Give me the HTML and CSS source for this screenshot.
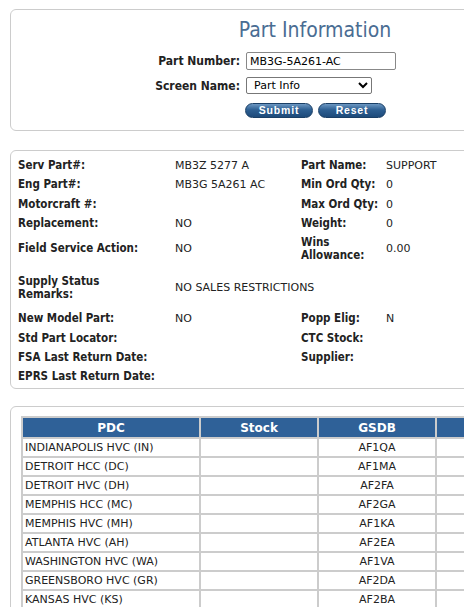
FILE: index.html
```html
<!DOCTYPE html>
<html lang="en">
    <head>
        <meta charset="UTF-8" />
        <meta name="viewport" content="width=device-width, initial-scale=1.0" />
        <title>Part Information</title>
        <link rel="stylesheet" href="styles.css">
    </head>
    <body>
        <!-- 검색 박스 -->
        <section class="box searchbx">
            <h1 class="tit">Part Information</h1>
            <form class="sform">
                <label class="lb" for="pno">Part Number:</label>
                <input id="pno" class="inp" type="text" value="MB3G-5A261-AC" />
                <label class="lb" for="scr">Screen Name:</label>
                <select id="scr" class="sel">
                    <option>Part Info</option>
                </select>
                <span></span>
                <div class="btns">
                    <button type="button" class="btn">Submit</button>
                    <button type="button" class="btn">Reset</button>
                </div>
            </form>
        </section>

        <!-- 부품정보 박스 -->
        <section class="box infobx">
            <div class="row">
                <b>Serv Part#:</b><span>MB3Z 5277 A</span>
                <b>Part Name:</b><span>SUPPORT</span>
            </div>
            <div class="row">
                <b>Eng Part#:</b><span>MB3G 5A261 AC</span>
                <b>Min Ord Qty:</b><span>0</span>
            </div>
            <div class="row">
                <b>Motorcraft #:</b><span></span>
                <b>Max Ord Qty:</b><span>0</span>
            </div>
            <div class="row">
                <b>Replacement:</b><span>NO</span>
                <b>Weight:</b><span>0</span>
            </div>
            <div class="row tall">
                <b>Field Service Action:</b><span>NO</span>
                <b>Wins<br />Allowance:</b><span>0.00</span>
            </div>
            <div class="row tall gap">
                <b>Supply Status<br />Remarks:</b><span class="wide">NO SALES RESTRICTIONS</span>
            </div>
            <div class="row">
                <b>New Model Part:</b><span>NO</span>
                <b>Popp Elig:</b><span>N</span>
            </div>
            <div class="row">
                <b>Std Part Locator:</b><span></span>
                <b>CTC Stock:</b><span></span>
            </div>
            <div class="row">
                <b>FSA Last Return Date:</b><span></span>
                <b>Supplier:</b><span></span>
            </div>
            <div class="row">
                <b>EPRS Last Return Date:</b><span></span>
                <b></b><span></span>
            </div>
        </section>

        <!-- 재고 테이블 박스 -->
        <section class="box stockbx">
            <table class="tbl">
                <colgroup>
                    <col class="c1" />
                    <col class="c2" />
                    <col class="c3" />
                    <col class="c4" />
                </colgroup>
                <thead>
                    <tr>
                        <th>PDC</th>
                        <th>Stock</th>
                        <th>GSDB</th>
                        <th>Phone</th>
                    </tr>
                </thead>
                <tbody>
                    <tr><td>INDIANAPOLIS HVC (IN)</td><td></td><td class="ct">AF1QA</td><td></td></tr>
                    <tr><td>DETROIT HCC (DC)</td><td></td><td class="ct">AF1MA</td><td></td></tr>
                    <tr><td>DETROIT HVC (DH)</td><td></td><td class="ct">AF2FA</td><td></td></tr>
                    <tr><td>MEMPHIS HCC (MC)</td><td></td><td class="ct">AF2GA</td><td></td></tr>
                    <tr><td>MEMPHIS HVC (MH)</td><td></td><td class="ct">AF1KA</td><td></td></tr>
                    <tr><td>ATLANTA HVC (AH)</td><td></td><td class="ct">AF2EA</td><td></td></tr>
                    <tr><td>WASHINGTON HVC (WA)</td><td></td><td class="ct">AF1VA</td><td></td></tr>
                    <tr><td>GREENSBORO HVC (GR)</td><td></td><td class="ct">AF2DA</td><td></td></tr>
                    <tr><td>KANSAS HVC (KS)</td><td></td><td class="ct">AF2BA</td><td></td></tr>
                    <tr><td>DENVER HVC (DV)</td><td></td><td class="ct">AF2CA</td><td></td></tr>
                </tbody>
            </table>
        </section>
    </body>
</html>
```

FILE: styles.css
```css
/* 공통 - 화면보다 넓은 페이지라 스크롤바는 숨김 */
html {
    overflow: hidden;
}
body {
    width: 610px;
    margin: 9px 10px;
    font-family: "DejaVu Sans", sans-serif;
    font-size: 11px;
    color: #222;
    background-color: #fff;
}

/* 둥근 테두리 박스 */
.box {
    border: 1px solid #ccc;
    border-radius: 6px;
}

/* 검색 박스 */
.searchbx {
    height: 112px;
    padding-top: 8px;
}
.tit {
    margin: 0 0 10px;
    font-family: "DejaVu Sans Condensed", "DejaVu Sans", sans-serif;
    font-size: 21px;
    font-weight: normal;
    text-align: center;
    color: #4a6d93;
}
.sform {
    display: grid;
    grid-template-columns: 235px 160px;
    row-gap: 7px;
    align-items: center;
}
.lb {
    justify-self: end;
    padding-right: 6px;
    font-family: "DejaVu Sans Condensed", "DejaVu Sans", sans-serif;
    font-size: 12px;
    font-weight: bold;
}
.inp {
    width: 150px;
    height: 18px;
    box-sizing: border-box;
    margin: 0;
    padding: 0 3px;
    border: 1px solid #888;
    border-radius: 2px;
    font: inherit;
}
.sel {
    width: 126px;
    height: 17px;
    box-sizing: border-box;
    margin: 0;
    padding: 0 0 0 3px;
    border: 1px solid #777;
    border-radius: 2px;
    font: inherit;
    background: #fff;
}
.btns {
    display: flex;
    gap: 5px;
    margin: 2px 0 0 -1px;
}
/* 파란 알약 버튼 */
.btn {
    width: 68px;
    height: 15px;
    padding: 0;
    border: 1px solid #1a3f66;
    border-radius: 8px;
    background: linear-gradient(#6c97c2, #2d5f92 45%, #1d4a7a);
    color: #fff;
    font-size: 10.5px;
    font-weight: bold;
    letter-spacing: 0.8px;
    line-height: 13px;
}

/* 부품정보 박스 */
.infobx {
    margin-top: 19px;
    padding: 5px 0 2px 7px;
}
.row {
    display: grid;
    grid-template-columns: 157px 126px 85px 1fr;
    align-items: center;
    height: 19.3px;
}
.row.tall {
    height: 31px;
}
.row.gap {
    margin: 8px 0 6px;
}
.row b {
    font-family: "DejaVu Sans Condensed", "DejaVu Sans", sans-serif;
    font-size: 11.5px;
    font-weight: bold;
    line-height: 13px;
}
.row .wide {
    grid-column: span 3;
}

/* 재고 테이블 박스 */
.stockbx {
    margin-top: 17px;
    padding: 9px 10px 0;
}
.tbl {
    width: 100%;
    table-layout: fixed;
    border-collapse: collapse;
}
.tbl .c1 { width: 178px; }
.tbl .c2 { width: 118px; }
.tbl .c3 { width: 118px; }
.tbl th,
.tbl td {
    border: 2px solid #ccc;
    height: 17px;
    padding: 0 2px;
    text-align: left;
    white-space: nowrap;
}
.tbl th {
    height: 19px;
    background-color: #2f6198;
    color: #fff;
    font-size: 12px;
    text-align: center;
}
.tbl .ct { text-align: center; }
```
